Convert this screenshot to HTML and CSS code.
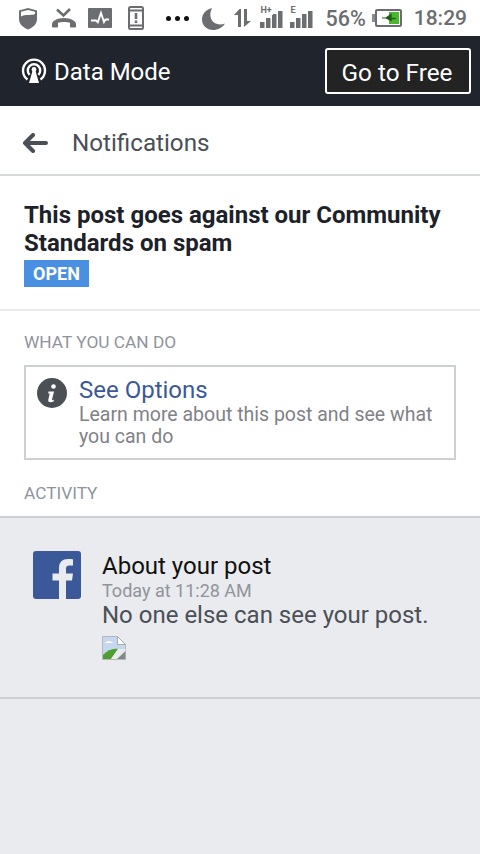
FILE: index.html
```html
<!DOCTYPE html>
<html lang="en">
<head>
<meta charset="utf-8">
<title>Notifications</title>
<link rel="stylesheet" href="styles.css">
</head>
<body>
<div class="status">
  <div class="status-left">
    <svg class="ic-shield" width="20" height="23" viewBox="0 0 20 23"><path d="M10 1 19 3.500v8.500c0 5-4 8.500-9 10.500-5-2-9-5.500-9-10.500V3.500z" fill="#6b6d70"/><path d="M3 4.800 10 3l7 1.800v2.200C13 9 7 6.500 3 9.500z" fill="#fff"/></svg>
    <svg class="ic-call" width="24" height="20" viewBox="0 0 24 20"><path d="M0 16c0-3 5.500-6 12-6s12 3 12 6v2.500c0 .6-.5 1-1 1h-4c-.5 0-1-.4-1-1v-3.700c-3-1.100-9-1.100-12 0v3.700c0 .6-.5 1-1 1H1c-.5 0-1-.4-1-1z" fill="#6b6d70"/><path d="M5 1.500l6.500 6L18 1" fill="none" stroke="#6b6d70" stroke-width="2.600"/></svg>
    <svg class="ic-graph" width="24" height="20" viewBox="0 0 24 20"><rect width="24" height="20" rx="1" fill="#6b6d70"/><path d="M3 12.500h5l1.800 1.800 3.200-9.300 3 9 1.500-2.500H21" fill="none" stroke="#fff" stroke-width="1.900"/></svg>
    <svg class="ic-box" width="16" height="24" viewBox="0 0 16 24"><rect x="1" y="1" width="14" height="22" rx="1.500" fill="#fff" stroke="#6b6d70" stroke-width="2"/><path d="M1 4.500h14M1 19.500h14" stroke="#6b6d70" stroke-width="2"/><path d="M8 7v6M8 14.500v2.500" stroke="#6b6d70" stroke-width="2.600"/></svg>
    <span class="dots"><i></i><i></i><i></i></span>
    <svg class="ic-moon" width="23" height="22" viewBox="0 0 23 22"><path d="M10 0C4 1.500 0 6 0 11.500 0 17.500 5 22 11 22c5 0 9.500-2.500 12-6.500-7 2.500-13.500-.5-14.500-7C8 5.500 8.800 2.500 10 0z" fill="#6b6d70"/></svg>
  </div>
  <div class="status-right">
    <svg class="ic-arrows" width="17" height="18" viewBox="0 0 17 18"><path d="M5.500 0 0 6h4v12h3V0z" fill="#6b6d70"/><path d="M10 0h3v12h4l-7 6z" fill="#6b6d70"/></svg>
    <span class="signal"><b class="net">H+</b>
      <svg class="bars" width="23" height="17" viewBox="0 0 23 17"><g fill="#6b6d70"><rect y="11" width="4.500" height="6"/><rect x="6" y="7" width="4.500" height="10"/><rect x="12" y="3" width="4.500" height="14"/><rect x="18" width="4.500" height="17"/></g></svg></span>
    <span class="signal signal-e"><b class="net">E</b>
      <svg class="bars" width="23" height="17" viewBox="0 0 23 17"><g fill="#6b6d70"><rect y="11" width="4.500" height="6"/><rect x="6" y="7" width="4.500" height="10"/><rect x="12" y="3" width="4.500" height="14"/><rect x="18" width="4.500" height="17"/></g></svg></span>
    <span class="pct">56%</span>
    <svg class="batt" width="30" height="18" viewBox="0 0 30 18"><path d="M0 5h3v8H0z" fill="#8a8c8f"/><rect x="4" y="1" width="25" height="16" rx="1" fill="#fff" stroke="#6b6d70" stroke-width="2"/><rect x="17" y="3" width="10" height="12" fill="#49b82f"/><path d="M10 9h7M14 9l5-3.500v3.500l5 .5-5 .5v1.500z" fill="#1f5e14" stroke="#1f5e14" stroke-width="1.200"/></svg>
    <span class="time">18:29</span>
  </div>
</div>

<div class="nav">
  <div class="mode">
    <svg width="26" height="26" viewBox="0 0 26 26"><g fill="none" stroke="#fff" stroke-width="2.400"><path d="M6.500 21.500a11 11 0 1 1 13 0"/><path d="M8.600 16.800a6.200 6.200 0 1 1 8.800 0"/></g><circle cx="13" cy="11.500" r="2.400" fill="#fff"/><path d="M11.500 13h3l3.500 12h-10z" fill="#fff"/></svg>
    <span>Data Mode</span>
  </div>
  <button class="free">Go to Free</button>
</div>

<header class="head">
  <svg width="26" height="20" viewBox="0 0 26 20"><path d="M11 2 3 10l8 8M3.500 10H24" fill="none" stroke="#4b4f56" stroke-width="4" stroke-linejoin="round" stroke-linecap="round"/></svg>
  <h1>Notifications</h1>
</header>

<section class="summary">
  <h2>This post goes against our Community Standards on spam</h2>
  <span class="badge">OPEN</span>
</section>

<section class="actions">
  <h3>WHAT YOU CAN DO</h3>
  <div class="card">
    <svg class="info" width="30" height="30" viewBox="0 0 30 30"><circle cx="15" cy="15" r="15" fill="#4b4f56"/><circle cx="16.500" cy="8.500" r="2.300" fill="#fff"/><path d="M11.500 13.500h5.500l-2 8c-.2.800.6 1 2 0l-.3 1.800c-2 1.200-6 1.700-5.400-1.500l1.400-6.300h-1.500z" fill="#fff"/></svg>
    <div class="card-text">
      <a class="card-title">See Options</a>
      <p>Learn more about this post and see what you can do</p>
    </div>
  </div>
  <h3 class="activity">ACTIVITY</h3>
</section>

<section class="feed">
  <div class="item">
    <svg class="fb" width="48" height="48" viewBox="0 0 48 48"><rect width="48" height="48" rx="3" fill="#3b5998"/><path d="M33 48V29.500h6l1-7h-7V18c0-2 .6-3.500 3.500-3.500H40V8.200C39.300 8.100 37.200 8 34.800 8 29.700 8 26 11 26 17v5.500h-6.500v7H26V48z" fill="#e9ebee"/></svg>
    <div class="item-text">
      <div class="item-title">About your post</div>
      <div class="item-time">Today at 11:28 AM</div>
      <div class="item-body">No one else can see your post.</div>
      <svg class="broken" width="24" height="24" viewBox="0 0 24 24"><path d="M.5.500h15l8 8v15H.5z" fill="#c5d8f0" stroke="#b4b7bb"/><path d="M15.500.500v8h8z" fill="#fff" stroke="#a8abaf"/><path d="M3 7c2-2.500 6-2.500 8 0z" fill="#fff"/><path d="M1 23v-4c5-5 10-7 15-6l-7 10z" fill="#4f9e32"/><path d="M9 23l7-10h7.500v10z" fill="#e9ebee"/><path d="M15 23l8.500-8v8z" fill="#84878a"/></svg>
    </div>
  </div>
</section>
</body>
</html>
```

FILE: styles.css
```css
* { box-sizing: border-box; }
html, body { margin: 0; padding: 0; }
body {
  width: 480px;
  height: 854px;
  overflow: hidden;
  background: #e9ebee;
  font-family: Roboto, "Liberation Sans", sans-serif;
}
svg { display: block; flex: none; }

.status {
  height: 36px;
  background: #fff;
  display: flex;
  align-items: center;
  justify-content: space-between;
  padding: 0 13px 0 18px;
  color: #6b6d70;
}
.status-left, .status-right { display: flex; align-items: center; }
.ic-call { margin-left: 14px; }
.ic-graph { margin-left: 12px; }
.ic-box { margin-left: 16px; }
.dots { display: flex; gap: 4px; margin-left: 22px; }
.dots i { width: 5px; height: 5px; background: #111; border-radius: 50%; }
.ic-moon { margin-left: 13px; margin-top: 2px; }
.signal { position: relative; display: block; width: 23px; height: 20px; margin-left: 9px; }
.signal-e { margin-left: 7px; }
.bars { position: absolute; left: 0; bottom: 0; }
.net {
  position: absolute;
  left: 0;
  top: -2px;
  z-index: 1;
  font-size: 9px;
  line-height: 9px;
  font-weight: 700;
  color: #6b6d70;
  background: #fff;
  padding-right: 1px;
}
.pct { font-size: 21.500px; font-weight: 500; margin-left: 12px; }
.batt { margin-left: 6px; }
.time { font-size: 21px; font-weight: 500; margin-left: 12px; }

.nav {
  height: 70px;
  background: #20252d;
  display: flex;
  align-items: center;
  justify-content: space-between;
  padding: 0 9px 0 21px;
  color: #fff;
}
.mode { display: flex; align-items: center; gap: 7px; font-size: 24px; }
.mode span { padding-top: 2px; }
.free {
  width: 146px;
  height: 46px;
  background: #232323;
  border: 2px solid #fff;
  border-radius: 3px;
  color: #fff;
  font: 400 24.300px Roboto, "Liberation Sans", sans-serif;
  padding: 3px 2px 0 0;
}

.head {
  height: 70px;
  background: #fff;
  border-bottom: 2px solid #d8d9db;
  display: flex;
  align-items: center;
  padding: 5px 0 0 22px;
  gap: 24px;
}
.head h1 { margin: 0; font-size: 24.200px; font-weight: 400; color: #4b4f56; }

.summary {
  background: #fff;
  height: 135px;
  padding: 25px 24px 0;
  border-bottom: 2px solid #e9ebee;
}
.summary h2 {
  margin: 0;
  font-size: 24px;
  line-height: 28px;
  font-weight: 700;
  color: #1d2129;
}
.badge {
  display: block;
  width: 65px;
  height: 27px;
  margin-top: 3px;
  background: #4a90e2;
  color: #fff;
  font-size: 18px;
  line-height: 27px;
  font-weight: 700;
  text-align: center;
}

.actions {
  background: #fff;
  height: 205px;
  padding: 21px 24px 0;
}
.actions h3 {
  margin: 0;
  font-size: 17.300px;
  line-height: 20px;
  font-weight: 400;
  color: #90949c;
}
.card {
  margin-top: 13px;
  height: 95px;
  border: 2px solid #ccd0d5;
  display: flex;
  padding: 10px 10px 0 11px;
  gap: 12px;
  width: 432px;
}
.info { margin-top: 1px; }
.card-title { display: block; font-size: 24px; line-height: 27px; color: #3b5998; }
.card-text p { margin: 0; font-size: 19.500px; line-height: 22px; color: #7f8287; }
.actions .activity { margin-top: 23px; }

.feed {
  height: 183px;
  border-top: 2px solid #ccd0d5;
  border-bottom: 2px solid #ccd0d5;
  padding: 33px 0 0 33px;
}
.item { display: flex; gap: 21px; }
.item-title { font-size: 24px; line-height: 30px; color: #111; }
.item-time { font-size: 18px; line-height: 19px; color: #90949c; }
.item-body { font-size: 24px; line-height: 30px; color: #4b4f56; }
.broken { margin-top: 6px; }
```
